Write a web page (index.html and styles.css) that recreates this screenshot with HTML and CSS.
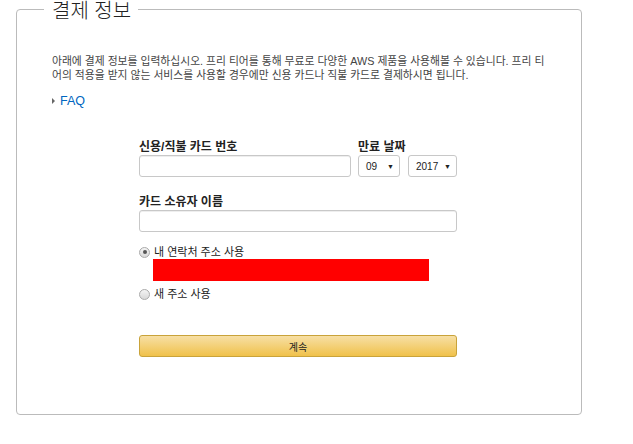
FILE: index.html
```html
<!DOCTYPE html>
<html lang="ko">
<head>
<meta charset="utf-8">
<link rel="stylesheet" href="styles.css">
</head>
<body>
<fieldset class="panel">
  <legend class="panel-title">결제 정보</legend>
  <p class="intro">아래에 결제 정보를 입력하십시오. 프리 티어를 통해 무료로 다양한 AWS 제품을 사용해볼 수 있습니다. 프리 티어의 적용을 받지 않는 서비스를 사용할 경우에만 신용 카드나 직불 카드로 결제하시면 됩니다.</p>
  <a class="faq" href="#"><span class="caret"></span>FAQ</a>
  <form class="form">
    <div class="row">
      <div class="field grow">
        <label class="label">신용/직불 카드 번호</label>
        <input class="input" type="text">
      </div>
      <div class="field">
        <label class="label">만료 날짜</label>
        <div class="selects">
          <div class="select month"><span>09</span><span class="arrow">▼</span></div>
          <div class="select year"><span>2017</span><span class="arrow">▼</span></div>
        </div>
      </div>
    </div>
    <div class="field name">
      <label class="label">카드 소유자 이름</label>
      <input class="input" type="text">
    </div>
    <div class="radios">
      <label class="radio"><span class="dot checked"></span>내 연락처 주소 사용</label>
      <div class="redacted"></div>
      <label class="radio"><span class="dot"></span>새 주소 사용</label>
    </div>
    <button class="btn" type="button">계속</button>
  </form>
</fieldset>
</body>
</html>
```
FILE: styles.css
```css
html, body {
  margin: 0;
  padding: 0;
  background: #fff;
}
body {
  font-family: "Liberation Sans", Arial, "Noto Sans CJK KR", sans-serif;
  color: #333;
}
.panel {
  box-sizing: border-box;
  width: 566px;
  margin: 1px 0 0 16px;
  padding: 16px 35px 57px 35px;
  border: 1px solid #bbb;
  border-radius: 4px;
}
.panel-title {
  margin-left: -8px;
  padding: 4px 7px 0 8px;
  font-size: 20px;
  font-weight: 300;
  color: #222;
  line-height: 12px;
}
.intro {
  margin: 0;
  padding-top: 21px;
  font-size: 10.8px;
  line-height: 14px;
  color: #444;
}
.faq {
  display: inline-flex;
  align-items: center;
  margin-top: 12px;
  color: #0066c0;
  font-size: 12.5px;
  text-decoration: none;
}
.caret {
  width: 0;
  height: 0;
  border-left: 3px solid #666;
  border-top: 3px solid transparent;
  border-bottom: 3px solid transparent;
  margin-right: 5px;
}
.form {
  width: 318px;
  margin: 32px 0 0 87px;
}
.row {
  display: flex;
  gap: 7px;
}
.field {
  display: flex;
  flex-direction: column;
}
.grow {
  flex: 1;
}
.label {
  font-size: 12px;
  font-weight: bold;
  color: #222;
  line-height: 14px;
  margin-bottom: 1px;
}
.input {
  box-sizing: border-box;
  height: 22px;
  border: 1px solid #c8c8c8;
  border-radius: 3px;
  box-shadow: inset 0 1px 0 #eee;
  margin: 0;
  padding: 0 6px;
}
.selects {
  display: flex;
  gap: 8px;
}
.select {
  box-sizing: border-box;
  height: 22px;
  border: 1px solid #c8c8c8;
  border-radius: 3px;
  display: flex;
  align-items: center;
  justify-content: space-between;
  padding: 0 5px 0 7px;
  font-size: 10px;
  color: #222;
}
.arrow {
  font-size: 7px;
}
.month { width: 42px; }
.year { width: 49px; }
.name {
  margin-top: 18px;
}
.radios {
  margin-top: 13px;
  font-size: 11px;
  color: #222;
}
.radio {
  display: flex;
  align-items: center;
  line-height: 14px;
}
.dot {
  box-sizing: border-box;
  width: 11px;
  height: 11px;
  border-radius: 50%;
  border: 1px solid #aaa;
  background: linear-gradient(#f4f4f4, #d8d8d8);
  margin-right: 4px;
  position: relative;
}
.dot.checked::after {
  content: "";
  position: absolute;
  left: 2.5px;
  top: 2.5px;
  width: 4px;
  height: 4px;
  border-radius: 50%;
  background: #555;
}
.redacted {
  width: 276px;
  height: 22px;
  background: #ff0000;
  margin: 0 0 6px 14px;
}
.btn {
  display: block;
  box-sizing: border-box;
  width: 318px;
  height: 22px;
  margin-top: 34px;
  border: 1px solid #c9a33a;
  border-radius: 3px;
  background: linear-gradient(#f7dfa5, #f0c14b);
  font-family: inherit;
  font-size: 10px;
  color: #222;
  padding: 0;
}
```
